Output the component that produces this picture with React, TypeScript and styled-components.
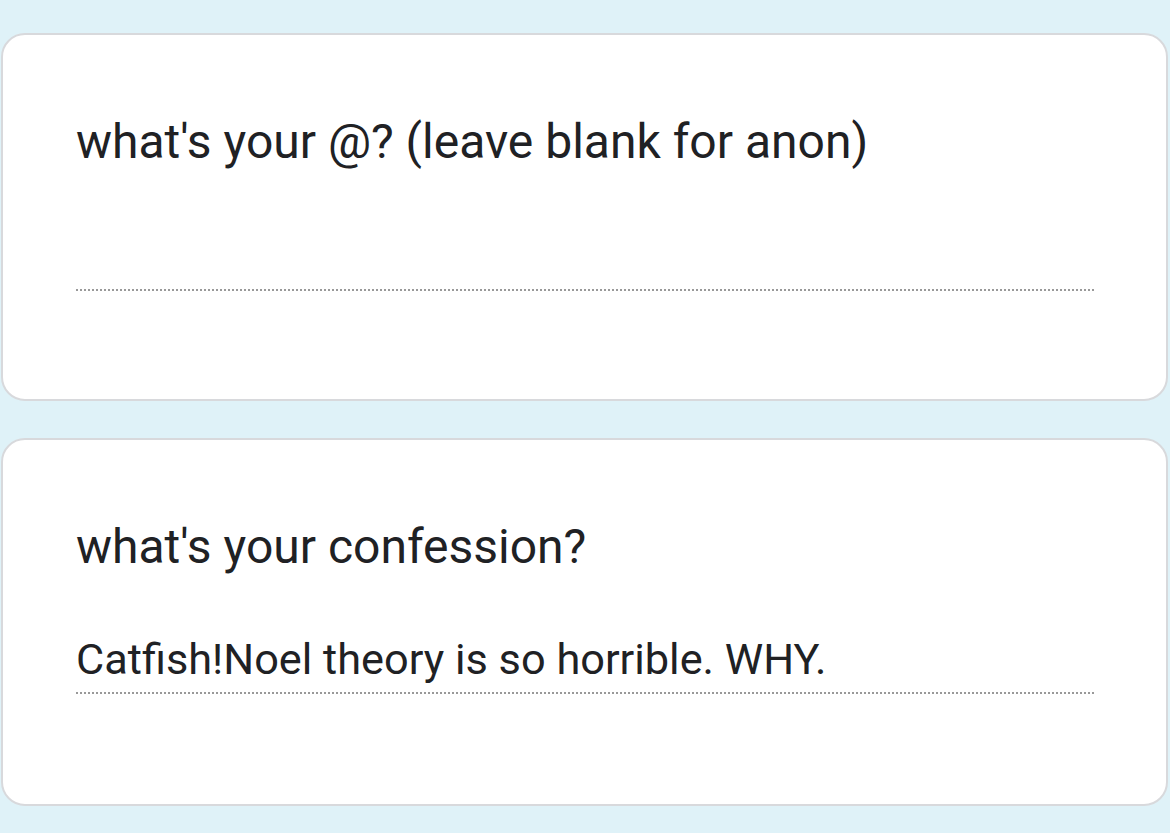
import React from "react";
import styled, { createGlobalStyle } from "styled-components";

const Global = createGlobalStyle`
  html, body { margin: 0; padding: 0; background: #dff2f8; }
  body { font-family: Roboto, "Noto Sans", sans-serif; color: #202124; }
`;

const Page = styled.div`
  display: flex;
  flex-direction: column;
  gap: 37px;
  padding: 33px 2px 0 1px;
  width: 1170px;
  height: 833px;
  box-sizing: border-box;
  overflow: hidden;
`;

const Card = styled.div`
  background: #fff;
  border: 2px solid #d8d9dc;
  border-radius: 24px;
  height: 368px;
  box-sizing: border-box;
  padding: 0 71px 0 73px;
  display: flex;
  flex-direction: column;
`;

const Question = styled.div`
  font-size: 48px;
  line-height: 56px;
  margin-top: 79px;
`;

const Field = styled.div<{ $gap: number; $pad: number }>`
  margin-top: ${(p) => p.$gap}px;
  font-size: 43.3px;
  line-height: 50px;
  min-height: 50px;
  padding-bottom: ${(p) => p.$pad}px;
  background: linear-gradient(to right, #999 50%, transparent 50%) left bottom / 4px 2px repeat-x;
`;

export default function App() {
  return (
    <>
      <Global />
      <Page>
        <Card>
          <Question>what's your @? (leave blank for anon)</Question>
          <Field $gap={54} $pad={17}></Field>
        </Card>
        <Card>
          <Question>what's your confession?</Question>
          <Field $gap={60} $pad={9}>Catfish!Noel theory is so horrible. WHY.</Field>
        </Card>
      </Page>
    </>
  );
}
